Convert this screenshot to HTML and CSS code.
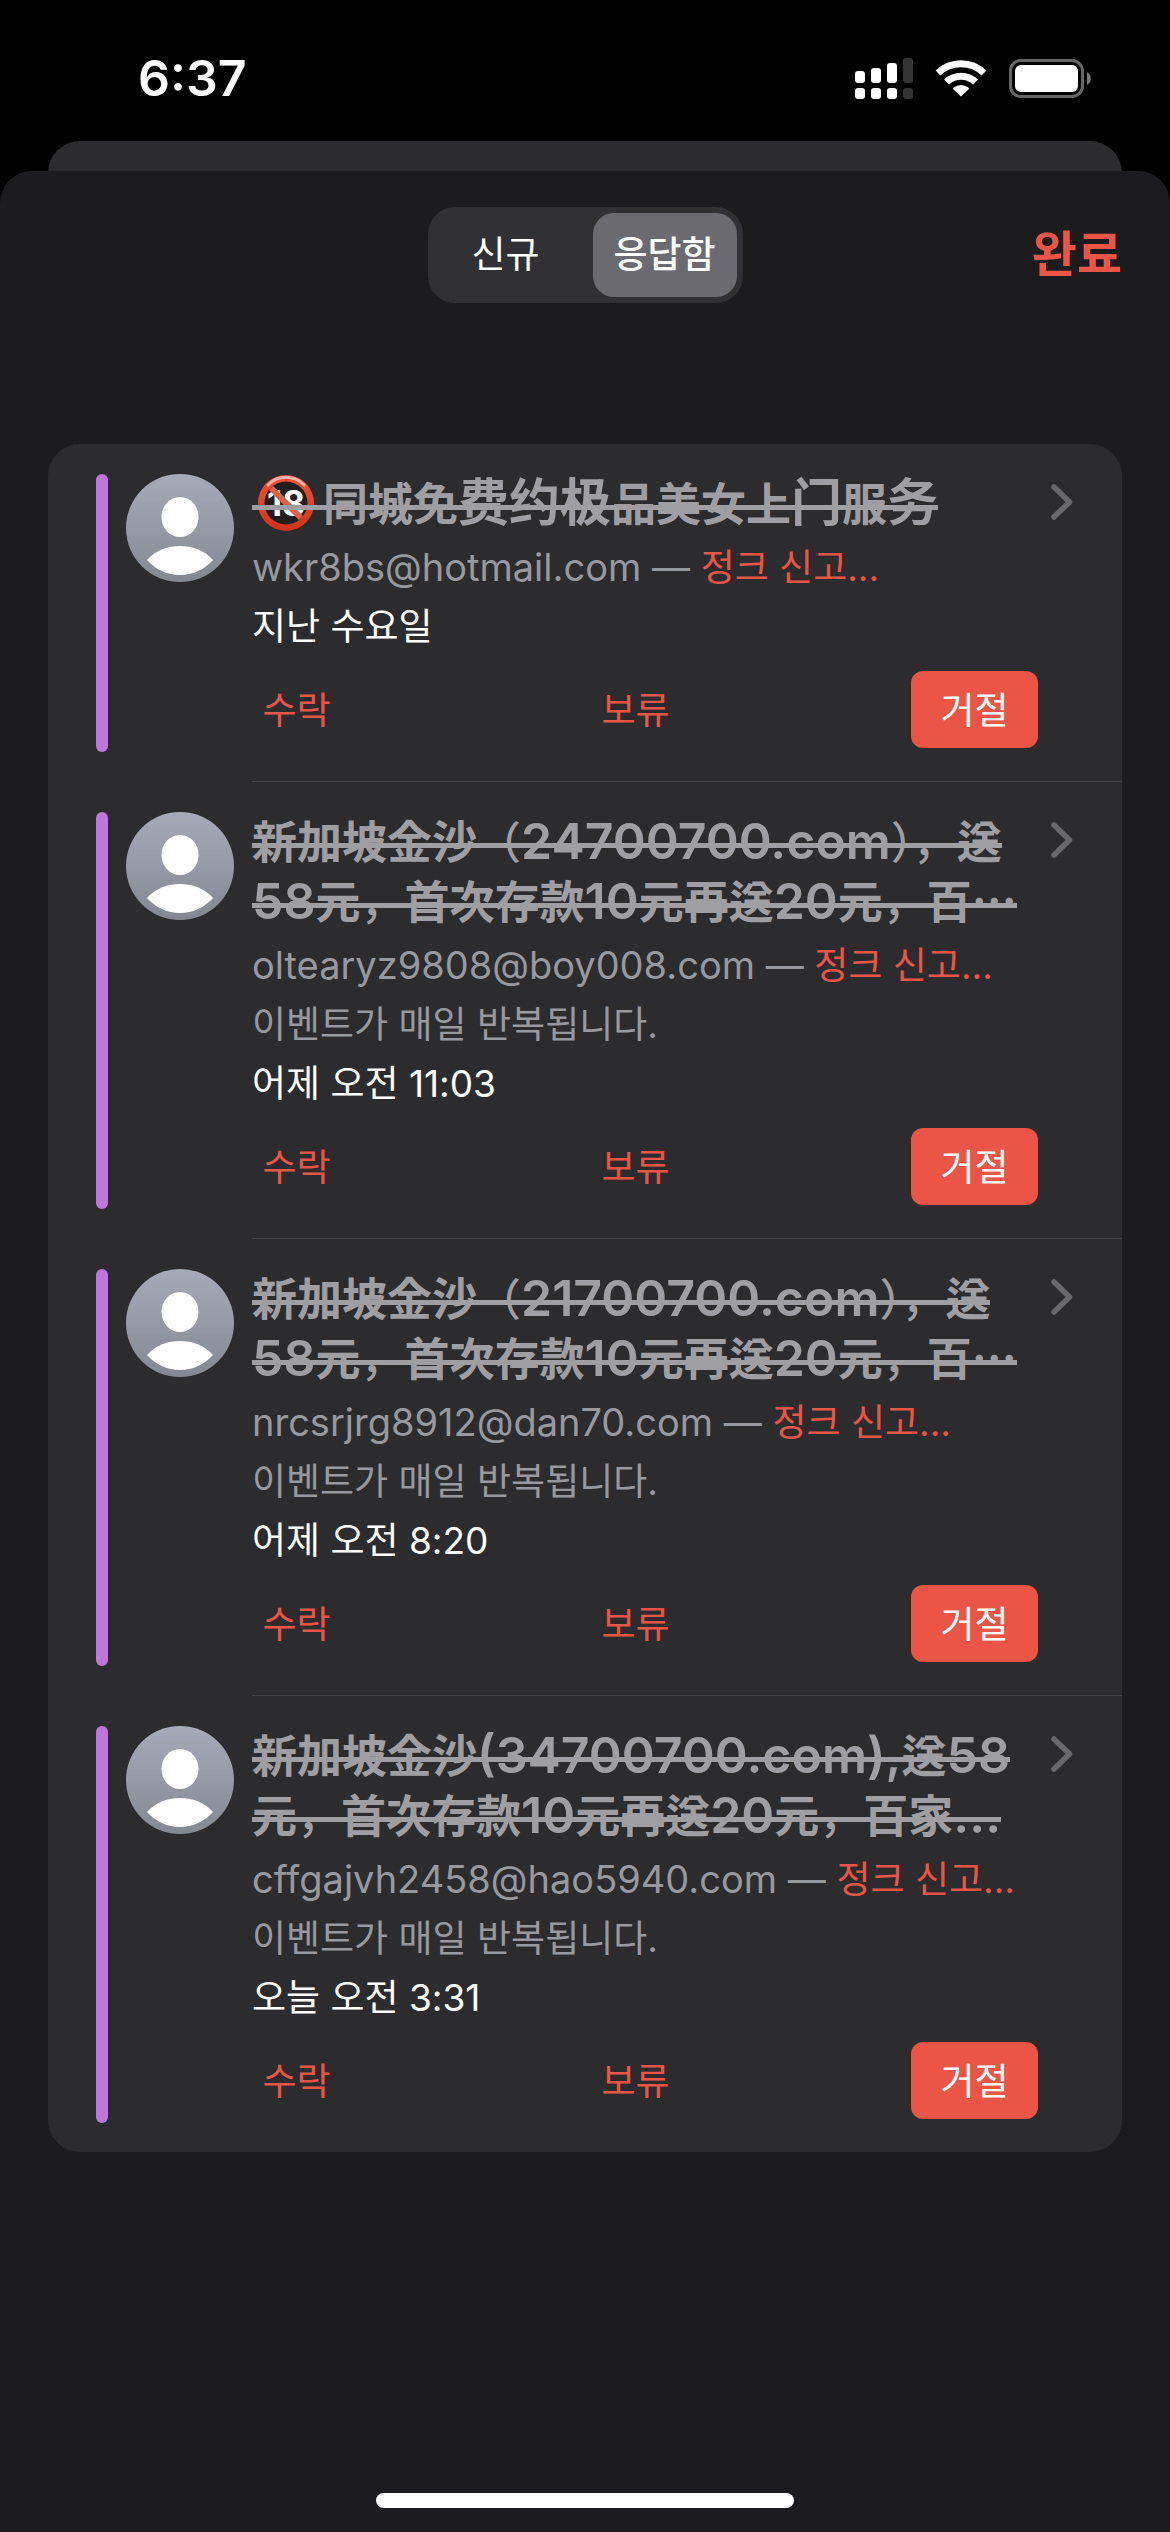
FILE: index.html
```html
<!DOCTYPE html>
<html lang="ko">
<head>
<meta charset="utf-8">
<meta name="viewport" content="width=device-width, initial-scale=1">
<title>캘린더 초대</title>
<link rel="stylesheet" href="styles.css">
</head>
<body>
<svg class="defs" aria-hidden="true">
  <defs>
    <linearGradient id="avatar-fill" x1="0" y1="0" x2="0" y2="1">
      <stop offset="0" stop-color="#a7abb9"/>
      <stop offset="1" stop-color="#848891"/>
    </linearGradient>
    <linearGradient id="ring-fill" x1="0" y1="0" x2="0" y2="1">
      <stop offset="0" stop-color="#f2543a"/>
      <stop offset="1" stop-color="#cf3319"/>
    </linearGradient>
    <symbol id="avatar" viewBox="0 0 108 108">
      <circle cx="54" cy="54" r="54" fill="url(#avatar-fill)"/>
      <ellipse cx="54" cy="43" rx="18.5" ry="20" fill="#fff"/>
      <path d="M21 86C30 76 42 72 54 72S78 76 87 86C78 96 66 101 54 101S30 96 21 86Z" fill="#fff"/>
    </symbol>
    <symbol id="chevron" viewBox="0 0 22 36">
      <path d="M3 3L18.500 18L3 33" fill="none" stroke="#68686d" stroke-width="5.500" stroke-linecap="round" stroke-linejoin="round"/>
    </symbol>
  </defs>
</svg>

<header class="status">
  <time class="clock">6:37</time>
  <div class="indicators">
    <svg width="58" height="42" viewBox="0 0 58 42" role="img" aria-label="신호">
      <g fill="#fff">
        <rect x="0" y="14" width="10" height="12" rx="3"/><rect x="16" y="11" width="10" height="15" rx="3"/><rect x="32" y="6" width="10" height="20" rx="3"/>
        <rect x="0" y="31" width="10" height="11" rx="3"/><rect x="16" y="31" width="10" height="11" rx="3"/><rect x="32" y="31" width="10" height="11" rx="3"/>
      </g>
      <g fill="#333"><rect x="48" y="1" width="10" height="25" rx="3"/><rect x="48" y="31" width="10" height="11" rx="3"/></g>
    </svg>
    <svg width="52" height="38" viewBox="0 0 52 38" role="img" aria-label="Wi-Fi">
      <g fill="none" stroke="#fff" stroke-width="7">
        <path d="M3 14A33.500 33.500 0 0 1 49 14"/>
        <path d="M11.500 23A21 21 0 0 1 40.500 23"/>
      </g>
      <path d="M26 37.500L18.500 30.500C18 30 18 29 18.700 28.500A11.500 11.500 0 0 1 33.300 28.500C34 29 34 30 33.500 30.500Z" fill="#fff"/>
    </svg>
    <svg width="83" height="39" viewBox="0 0 83 39" role="img" aria-label="배터리">
      <rect x="1.500" y="1.500" width="72" height="36" rx="10.500" fill="none" stroke="#666" stroke-width="3"/>
      <rect x="6" y="6" width="63" height="27" rx="6" fill="#fff"/>
      <path d="M78 13A7.500 7.500 0 0 1 78 26Z" fill="#7a7a7a"/>
    </svg>
  </div>
</header>

<div class="sheet-behind"></div>

<main class="sheet">
  <div class="toolbar">
    <fieldset class="segments">
      <label class="segment"><input type="radio" name="filter">신규</label>
      <label class="segment"><input type="radio" name="filter" checked>응답함</label>
    </fieldset>
    <button class="done" type="button">완료</button>
  </div>

  <ul class="invites">
    <li>
      <article class="invite">
        <span class="bar"></span>
        <svg class="avatar"><use href="#avatar"/></svg>
        <div class="details">
          <h2 class="title"><s><svg class="emoji" viewBox="0 0 71 60" role="img" aria-label="🔞"><circle cx="34" cy="31" r="28" fill="url(#ring-fill)"/><path d="M16 13A25 25 0 0 1 52 13" fill="none" stroke="#f9b3a4" stroke-width="3" stroke-linecap="round"/><circle cx="34" cy="31" r="21.500" fill="#1f1f20"/><text class="emoji-text" x="34" y="44" text-anchor="middle">18</text><path d="M19 16L49 46" stroke="#e0614a" stroke-width="6"/><rect y="33" width="71" height="5" fill="#9f9ea3"/></svg>同城免<span class="big">费约极</span>品美女上<span class="big">门</span>服<span class="big">务</span></s></h2>
          <p class="from">wkr8bs@hotmail.com — <a href="#">정크 신고...</a></p>
          <p class="when">지난 수요일</p>
          <div class="actions"><button type="button">수락</button><button type="button">보류</button><button type="button" class="chosen">거절</button></div>
        </div>
        <svg class="chevron"><use href="#chevron"/></svg>
      </article>
    </li>
    <li>
      <article class="invite">
        <span class="bar"></span>
        <svg class="avatar"><use href="#avatar"/></svg>
        <div class="details">
          <h2 class="title"><s>新加坡金沙<span class="mark">（</span><span class="latin">24700700.com</span><span class="mark">）</span><span class="mark">，</span>送<br><span class="latin">58</span>元<span class="mark">，</span>首次存款<span class="latin">10</span>元再送<span class="latin">20</span>元<span class="mark">，</span>百⋯</s></h2>
          <p class="from">oltearyz9808@boy008.com — <a href="#">정크 신고...</a></p>
          <p class="repeat">이벤트가 매일 반복됩니다.</p>
          <p class="when">어제 오전 11:03</p>
          <div class="actions"><button type="button">수락</button><button type="button">보류</button><button type="button" class="chosen">거절</button></div>
        </div>
        <svg class="chevron"><use href="#chevron"/></svg>
      </article>
    </li>
    <li>
      <article class="invite">
        <span class="bar"></span>
        <svg class="avatar"><use href="#avatar"/></svg>
        <div class="details">
          <h2 class="title"><s>新加坡金沙<span class="mark">（</span><span class="latin">21700700.com</span><span class="mark">）</span><span class="mark">，</span>送<br><span class="latin">58</span>元<span class="mark">，</span>首次存款<span class="latin">10</span>元再送<span class="latin">20</span>元<span class="mark">，</span>百⋯</s></h2>
          <p class="from">nrcsrjrg8912@dan70.com — <a href="#">정크 신고...</a></p>
          <p class="repeat">이벤트가 매일 반복됩니다.</p>
          <p class="when">어제 오전 8:20</p>
          <div class="actions"><button type="button">수락</button><button type="button">보류</button><button type="button" class="chosen">거절</button></div>
        </div>
        <svg class="chevron"><use href="#chevron"/></svg>
      </article>
    </li>
    <li>
      <article class="invite">
        <span class="bar"></span>
        <svg class="avatar"><use href="#avatar"/></svg>
        <div class="details">
          <h2 class="title"><s>新加坡金沙<span class="latin">(34700700.com),</span>送<span class="latin">58</span><br>元<span class="mark">，</span>首次存款<span class="latin">10</span>元再送<span class="latin">20</span>元<span class="mark">，</span>百家<span class="latin">...</span></s></h2>
          <p class="from">cffgajvh2458@hao5940.com — <a href="#">정크 신고...</a></p>
          <p class="repeat">이벤트가 매일 반복됩니다.</p>
          <p class="when">오늘 오전 3:31</p>
          <div class="actions"><button type="button">수락</button><button type="button">보류</button><button type="button" class="chosen">거절</button></div>
        </div>
        <svg class="chevron"><use href="#chevron"/></svg>
      </article>
    </li>
  </ul>

  <div class="home-indicator"></div>
</main>
</body>
</html>
```

FILE: styles.css
```css
* { box-sizing: border-box; }

body {
  margin: 0;
  min-height: 100vh;
  display: flex;
  flex-direction: column;
  background: #000;
  color: #fff;
  font-family: Inter, "Noto Sans CJK KR", sans-serif;
  font-size: 37px;
}

.defs { position: absolute; width: 0; height: 0; }

h2, p, ul, fieldset { margin: 0; padding: 0; border: 0; }
ul { list-style: none; }

button {
  padding: 0;
  border: 0;
  background: none;
  color: #eb5545;
  font: inherit;
}

a { color: #eb5545; text-decoration: none; }

/* Status bar */
.status {
  height: 141px;
  padding: 15px 78px 0 138px;
  display: flex;
  justify-content: space-between;
  align-items: center;
}

.clock { font-size: 50px; font-weight: 600; }

.indicators { display: flex; align-items: center; gap: 22px; }

/* Sheets */
.sheet-behind {
  height: 72px;
  margin: 0 48px -42px;
  border-radius: 32px 32px 0 0;
  background: #2c2c2e;
}

.sheet {
  flex: 1;
  display: flex;
  flex-direction: column;
  padding: 36px 48px 24px;
  border-radius: 32px 32px 0 0;
  background: #1c1c1e;
}

.toolbar {
  display: grid;
  grid-template-columns: 1fr auto 1fr;
  align-items: center;
  margin-bottom: 141px;
}

.segments {
  grid-column: 2;
  display: grid;
  grid-template-columns: 144px 144px;
  gap: 15px;
  padding: 6px;
  border-radius: 27px;
  background: #313135;
}

.segment {
  height: 84px;
  line-height: 84px;
  border-radius: 21px;
  text-align: center;
}

.segment:has(:checked) { background: #6a6a70; font-weight: 500; }

.segment input { position: absolute; opacity: 0; }

.done { justify-self: end; font-size: 49px; font-weight: 600; line-height: 84px; }

/* Invitations */
.invites { border-radius: 32px; background: #2c2c2e; }

.invites li + li::before {
  content: "";
  display: block;
  height: 1px;
  margin-left: 204px;
  background: #444447;
}

.invite {
  display: flex;
  align-items: flex-start;
  padding: 30px 49px 29px 48px;
}

.bar {
  align-self: stretch;
  width: 12px;
  margin-right: 18px;
  border-radius: 6px;
  background: #bf75dc;
}

.avatar { flex: none; width: 108px; height: 108px; margin-right: 18px; }

.details { flex: 1; min-width: 0; white-space: nowrap; }

.chevron { flex: none; width: 22px; height: 36px; margin: 10px 0 0 13px; }

.title {
  margin: -2px 0 5px;
  color: #9f9ea3;
  font-family: "Noto Sans CJK KR", sans-serif;
  font-size: 45px;
  font-weight: 700;
  line-height: 60px;
}

/* One straight strike per line, whatever fonts the line mixes */
.title s {
  text-decoration: none;
  background: linear-gradient(#9f9ea3, #9f9ea3) 0 36px / 100% 5px no-repeat;
  -webkit-box-decoration-break: clone;
  box-decoration-break: clone;
}

.title span { line-height: 0; }
.latin { font-family: Inter, sans-serif; font-size: 50px; font-weight: 600; }
.big { font-family: "Noto Sans CJK SC", sans-serif; font-size: 51px; }
.mark { font-size: 44px; font-weight: 500; }

.emoji { width: 71px; height: 60px; vertical-align: top; }
.emoji-text { font: 700 35px Inter, sans-serif; fill: #fff; }

.from, .repeat { color: #98989f; }
.from { font-size: 38px; line-height: 60px; }
.from a { font-size: 37px; line-height: 0; }
.repeat { line-height: 59px; }
.when { line-height: 60px; }

.actions {
  display: flex;
  justify-content: space-between;
  margin: 14px 0 4px -19px;
}

.actions button {
  width: 127px;
  height: 77px;
  padding-bottom: 4px;
  border-radius: 12px;
}

.actions .chosen { background: #eb5545; color: #fff; }

.home-indicator {
  align-self: center;
  width: 418px;
  height: 15px;
  margin-top: auto;
  border-radius: 8px;
  background: #fff;
}
```
